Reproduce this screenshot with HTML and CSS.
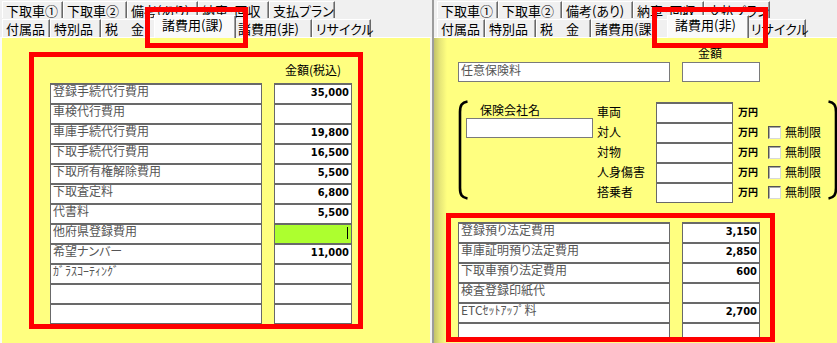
FILE: index.html
```html
<!DOCTYPE html>
<html lang="ja">
<head>
<meta charset="utf-8">
<title>諸費用</title>
<link rel="stylesheet" href="styles.css">
</head>
<body>
<div class="screen">
  <section class="win win-left">
    <div class="tabs">
      <div class="tabrow row1">
        <div class="tab w61">下取車①</div>
        <div class="tab w64">下取車②</div>
        <div class="tab w71">備考(あり)</div>
        <div class="tab w71">納車･回収</div>
        <div class="tab w66">支払プラン</div>
      </div>
      <div class="tabrow row2">
        <div class="tab w48">付属品</div>
        <div class="tab w51">特別品</div>
        <div class="tab w55">税　金</div>
        <div class="tab w82 is-active">諸費用(課)</div>
        <div class="tab w78">諸費用(非)</div>
        <div class="tab w59">リサイクル</div>
      </div>
      <div class="mark mark-tab-left"></div>
    </div>
    <div class="pane pane-left">
      <div class="markbox box-left">
        <div class="head-left">金額(税込)</div>
        <div class="ledger">
          <div class="cell label">登録手続代行費用</div><div class="cell amt">35,000</div>
          <div class="cell label">車検代行費用</div><div class="cell amt"></div>
          <div class="cell label">車庫手続代行費用</div><div class="cell amt">19,800</div>
          <div class="cell label">下取手続代行費用</div><div class="cell amt">16,500</div>
          <div class="cell label">下取所有権解除費用</div><div class="cell amt">5,500</div>
          <div class="cell label">下取査定料</div><div class="cell amt">6,800</div>
          <div class="cell label">代書料</div><div class="cell amt">5,500</div>
          <div class="cell label">他府県登録費用</div><div class="cell amt is-focus"><span class="caret"></span></div>
          <div class="cell label">希望ナンバー</div><div class="cell amt">11,000</div>
          <div class="cell label">ｶﾞﾗｽｺｰﾃｨﾝｸﾞ</div><div class="cell amt"></div>
          <div class="cell label"></div><div class="cell amt"></div>
          <div class="cell label"></div><div class="cell amt"></div>
        </div>
      </div>
    </div>
  </section>
  <div class="divider"></div>
  <section class="win win-right">
    <div class="tabs">
      <div class="tabrow row1">
        <div class="tab w61">下取車①</div>
        <div class="tab w64">下取車②</div>
        <div class="tab w71">備考(あり)</div>
        <div class="tab w71">納車･回収</div>
        <div class="tab w66">支払プラン</div>
      </div>
      <div class="tabrow row2">
        <div class="tab w48">付属品</div>
        <div class="tab w51">特別品</div>
        <div class="tab w55">税　金</div>
        <div class="tab w78">諸費用(課)</div>
        <div class="tab w82 is-active">諸費用(非)</div>
        <div class="tab w59">リサイクル</div>
      </div>
      <div class="mark mark-tab-right"></div>
    </div>
    <div class="pane pane-right">
      <div class="top">
        <div class="head-right">金額</div>
        <div class="plain-row">
          <div class="box box-label">任意保険料</div>
          <div class="box box-amt"></div>
        </div>
        <div class="policy">
          <svg class="paren paren-l" viewBox="0 0 10 100" width="10" height="100"><path d="M9.5 1.5 C4 2.5 2 5 2 12 V88 C2 95 4 97.5 9.5 98.5" fill="none" stroke="#000" stroke-width="2.6"/></svg>
          <div class="company">
            <div class="company-label">保険会社名</div>
            <div class="box company-in"></div>
          </div>
          <div class="cov r1">車両</div><div class="cell cov-in r1"></div><div class="unit r1">万円</div>
          <div class="cov r2">対人</div><div class="cell cov-in r2"></div><div class="unit r2">万円</div><div class="check r2"></div><div class="nolimit r2">無制限</div>
          <div class="cov r3">対物</div><div class="cell cov-in r3"></div><div class="unit r3">万円</div><div class="check r3"></div><div class="nolimit r3">無制限</div>
          <div class="cov r4">人身傷害</div><div class="cell cov-in r4"></div><div class="unit r4">万円</div><div class="check r4"></div><div class="nolimit r4">無制限</div>
          <div class="cov r5">搭乗者</div><div class="cell cov-in r5 is-last"></div><div class="unit r5">万円</div><div class="check r5"></div><div class="nolimit r5">無制限</div>
          <svg class="paren paren-r" viewBox="0 0 10 100" width="10" height="100"><path d="M0.5 1.5 C6 2.5 8 5 8 12 V88 C8 95 6 97.5 0.5 98.5" fill="none" stroke="#000" stroke-width="2.6"/></svg>
        </div>
      </div>
      <div class="markbox box-right">
        <div class="ledger">
          <div class="cell label">登録預り法定費用</div><div class="cell amt">3,150</div>
          <div class="cell label">車庫証明預り法定費用</div><div class="cell amt">2,850</div>
          <div class="cell label">下取車預り法定費用</div><div class="cell amt">600</div>
          <div class="cell label">検査登録印紙代</div><div class="cell amt"></div>
          <div class="cell label">ETCｾｯﾄｱｯﾌﾟ料</div><div class="cell amt">2,700</div>
          <div class="cell label"></div><div class="cell amt"></div>
        </div>
      </div>
    </div>
  </section>
</div>
</body>
</html>
```

FILE: styles.css
```css
* { box-sizing: border-box; }

html, body {
  margin: 0;
  padding: 0;
}

body {
  width: 837px;
  height: 343px;
  overflow: hidden;
  background: #f0f0f0;
  font-family: "Noto Sans CJK JP", "Noto Sans", sans-serif;
  color: #000;
}

.screen {
  display: flex;
  height: 343px;
}

.win {
  position: relative;
  display: flex;
  flex-direction: column;
  height: 343px;
}

.win-left { width: 432px; flex: none; }
.win-right { flex: 1; min-width: 0; overflow: hidden; }

.divider {
  flex: none;
  width: 2px;
  background: #9c9c9c;
}

/* ---------- tabs ---------- */
.tabs {
  position: relative;
  flex: none;
  height: 37px;
}
.win-left .tabs { padding-left: 2px; }
.win-right .tabs { padding-left: 3px; }

.tabrow { display: flex; }
.row1 { height: 18px; padding-top: 1px; }
.row2 { height: 18px; margin-top: 1px; }

.tab {
  flex: none;
  height: 100%;
  background: #f0f0f0;
  border-top: 1px solid #fff;
  border-left: 1px solid #fff;
  border-right: 1px solid #696969;
  box-shadow: inset -1px 0 #a0a0a0;
  font-size: 13px;
  font-feature-settings: "palt";
  line-height: 15px;
  padding: 1px 0 0 3px;
  white-space: nowrap;
}

.row1 .tab { line-height: 13px; padding-top: 2px; }

.tab.is-active {
  position: relative;
  z-index: 1;
  height: 23px;
  margin: -4px -2px 0;
  background: #fafafa;
  padding: 1px 0 0 7px;
}

.w48 { width: 48px; }
.w51 { width: 51px; }
.w55 { width: 55px; }
.w59 { width: 59px; }
.w61 { width: 61px; }
.w64 { width: 64px; }
.w66 { width: 66px; }
.w71 { width: 71px; }
.w78 { width: 78px; }
.w82 { width: 82px; }

/* red annotation rectangles over the tabs */
.mark {
  position: absolute;
  z-index: 3;
  top: 7px;
  height: 41px;
  border: 5px solid #ff0000;
}
.mark-tab-left { left: 145px; width: 103px; }
.mark-tab-right { left: 218px; width: 116px; }

/* ---------- panes ---------- */
.pane {
  flex: 1;
  border-top: 1px solid #fff;
  background: #ffff80;
}

.pane-left {
  border-left: 2px solid #fbfbfb;
  border-right: 2px solid #f4f4f4;
  padding: 14px 0 0 27px;
}

.pane-right {
  background: linear-gradient(to right, #c2c26a 0, #e6e678 6px, #ffff80 13px);
}

.markbox {
  border: 5px solid #ff0000;
}

.box-left {
  width: 334px;
  height: 277px;
  padding: 0 6px 0 16px;
}

.head-left {
  width: 78px;
  margin-left: 224px;
  height: 26px;
  padding-top: 6px;
  font-size: 12px;
  line-height: 14px;
  text-align: center;
  white-space: nowrap;
}

.ledger {
  display: grid;
  grid-template-columns: 212px 78px;
  column-gap: 12px;
  grid-auto-rows: 20px;
}

.cell {
  height: 20px;
  background: #fff;
  border: 1px solid #696969;
  border-top-width: 2px;
  border-bottom: 0;
}

.ledger .cell:nth-last-child(-n+2),
.cell.is-last {
  box-shadow: 0 1px #696969;
}

.label {
  font-size: 12px;
  font-feature-settings: "palt";
  line-height: 12px;
  color: #555;
  padding-left: 2px;
  white-space: nowrap;
}

.amt {
  text-align: right;
  padding-right: 2px;
  font-family: "Liberation Sans Narrow", "DejaVu Sans Condensed", "DejaVu Sans", sans-serif;
  font-stretch: condensed;
  font-weight: bold;
  font-size: 11px;
  line-height: 15px;
}

.amt.is-focus {
  background: #adff2f;
  padding-top: 2px;
}

.caret {
  display: inline-block;
  width: 1px;
  height: 12px;
  background: #000;
  vertical-align: top;
  margin-right: 1px;
}

/* ---------- right pane top ---------- */
.top {
  padding: 6px 0 0 24px;
}

.head-right {
  margin-left: 240px;
  font-size: 12px;
  line-height: 18px;
}

.plain-row {
  display: flex;
  gap: 12px;
}

.box {
  height: 20px;
  background: #fff;
  border: 1px solid #7a7a7a;
}

.box-label {
  width: 212px;
  font-size: 12px;
  line-height: 12px;
  padding: 1px 0 0 2px;
  color: #555;
}

.box-amt { width: 78px; }

.policy {
  display: grid;
  grid-template-columns: 8px 131px 59px 82px 30px 17px 43px 10px;
  grid-template-rows: 2px repeat(5, 20px);
  margin-top: 18px;
  width: 380px;
}

.paren {
  display: block;
  grid-row: 1 / 7;
  overflow: visible;
}
.paren-l { grid-column: 1; }
.paren-r { grid-column: 8; }

.company {
  grid-column: 2;
  grid-row: 1 / 7;
  padding-top: 2px;
}

.company-label {
  font-size: 12px;
  line-height: 16px;
  padding-left: 14px;
}

.company-in { width: 127px; }

.cov {
  grid-column: 3;
  font-size: 12px;
  line-height: 20px;
  white-space: nowrap;
}

.cov-in {
  grid-column: 4;
  width: 77px;
}

.unit {
  grid-column: 5;
  font-size: 10px;
  font-weight: bold;
  line-height: 20px;
}

.check {
  grid-column: 6;
  align-self: center;
  width: 13px;
  height: 13px;
  background: #fff;
  border: 1px solid;
  border-color: #555 #d8d8d8 #d8d8d8 #555;
  box-shadow: inset 1px 1px #a8a8a8;
}

.nolimit {
  grid-column: 7;
  font-size: 12px;
  line-height: 20px;
  white-space: nowrap;
}

.r1 { grid-row: 2; }
.r2 { grid-row: 3; }
.r3 { grid-row: 4; }
.r4 { grid-row: 5; }
.r5 { grid-row: 6; }

/* ---------- right pane table ---------- */
.box-right {
  width: 329px;
  height: 129px;
  margin: 11px 0 0 12px;
  padding: 4px 10px 0 7px;
  overflow: hidden;
}
```
